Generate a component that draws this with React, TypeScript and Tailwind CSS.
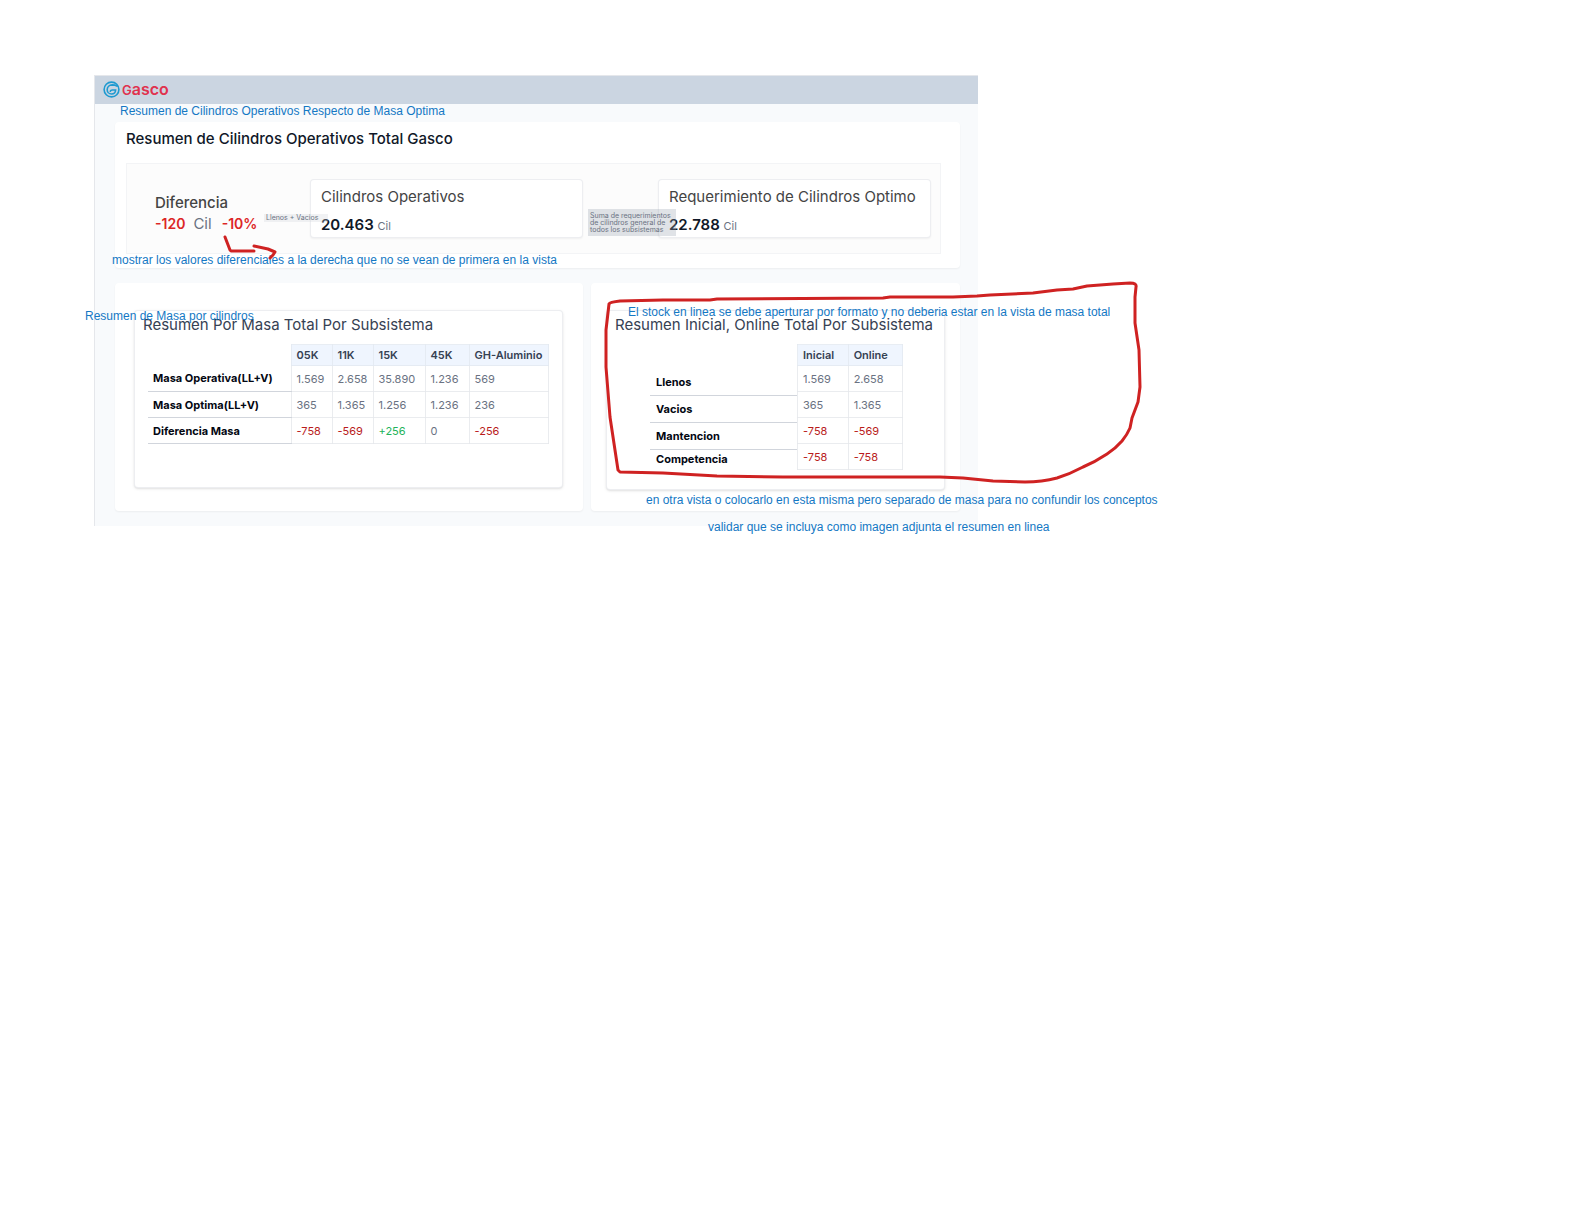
import type { ReactNode } from "react";

type Cell = { value: string; tone?: "red" | "green" };

const massColumns = ["05K", "11K", "15K", "45K", "GH-Aluminio"];
const massRows: { label: string; cells: Cell[] }[] = [
  {
    label: "Masa Operativa(LL+V)",
    cells: [{ value: "1.569" }, { value: "2.658" }, { value: "35.890" }, { value: "1.236" }, { value: "569" }],
  },
  {
    label: "Masa Optima(LL+V)",
    cells: [{ value: "365" }, { value: "1.365" }, { value: "1.256" }, { value: "1.236" }, { value: "236" }],
  },
  {
    label: "Diferencia Masa",
    cells: [
      { value: "-758", tone: "red" },
      { value: "-569", tone: "red" },
      { value: "+256", tone: "green" },
      { value: "0" },
      { value: "-256", tone: "red" },
    ],
  },
];

const stockColumns = ["Inicial", "Online"];
const stockLabels = ["Llenos", "Vacios", "Mantencion", "Competencia"];
const stockRows: Cell[][] = [
  [{ value: "1.569" }, { value: "2.658" }],
  [{ value: "365" }, { value: "1.365" }],
  [{ value: "-758", tone: "red" }, { value: "-569", tone: "red" }],
  [{ value: "-758", tone: "red" }, { value: "-758", tone: "red" }],
];

function toneClass(tone?: "red" | "green") {
  if (tone === "red") return "text-[#b91c1c]";
  if (tone === "green") return "text-[#22b35a]";
  return "text-gray-500";
}

function HeadCell({ children }: { children: ReactNode }) {
  return (
    <th scope="col" className="h-[21px] border border-slate-200/80 bg-[#eff5fe] px-[5px] text-left font-semibold whitespace-nowrap text-gray-700">
      {children}
    </th>
  );
}

function BodyCell({ cell }: { cell: Cell }) {
  return <td className={`border border-gray-200/80 px-[5px] ${toneClass(cell.tone)}`}>{cell.value}</td>;
}

function Logo() {
  return (
    <div className="flex items-center gap-[2px] pb-px">
      <svg viewBox="0 0 17 17" className="size-[17px]" fill="none" stroke="#1f9ad0" strokeWidth="1.6" strokeLinecap="round" aria-hidden="true">
        <circle cx="8.500" cy="8.500" r="7.400" />
        <path d="M14 5.200C12.500 4.200 10.800 3.900 9.200 3.900 6.300 4 4.200 6 4.200 8.700c0 2.500 1.900 4.300 4.300 4.300 2.300 0 4-1.500 4.100-4H9.300C8.200 9 7.500 9.500 7.300 10.300" />
      </svg>
      <span className="text-[16px] leading-5 font-semibold text-[#e0324e]">
        <span className="text-[13px]">G</span>asco
      </span>
    </div>
  );
}

function StatCard({ title, value }: { title: string; value: string }) {
  return (
    <section className="h-[59px] w-[273px] rounded-sm border border-gray-200/70 bg-white px-[10px] pt-[7px] shadow-xs">
      <h3 className="text-[15px] leading-5 text-[#444444]">{title}</h3>
      <p className="mt-[8px] text-[15px] leading-5 font-semibold text-gray-900">
        {value} <span className="text-[11px] font-normal text-gray-500">Cil</span>
      </p>
    </section>
  );
}

function Note({ className, children }: { className: string; children: ReactNode }) {
  return (
    <p className={`absolute font-['Liberation_Sans',sans-serif] text-[12px] leading-4 whitespace-nowrap text-[#1478c4] ${className}`}>
      {children}
    </p>
  );
}

function Scribbles() {
  return (
    <svg
      className="pointer-events-none absolute top-0 left-0 h-[560px] w-[1200px]"
      viewBox="0 0 1200 560"
      fill="none"
      stroke="#cf2222"
      strokeWidth="3"
      strokeLinecap="round"
      strokeLinejoin="round"
      aria-hidden="true"
    >
      <path d="M225 237l5 13 1 1 23 0M254 246l14 3 7 3-2 3-3 3" />
      <path d="M606 330L609 304Q610 302 620 301L663 300H710L717 299L883 298L890 297H953L977 296L990 295L1033 293L1057 290L1073 289L1087 286L1113 284L1130 283Q1137 283 1136 287L1135 297V323L1139 350L1140 387L1138 402L1132 418L1130 428Q1127 435 1122 441Q1115 449 1107 454Q1095 462 1083 467Q1070 474 1057 478Q1042 482 1025 482L993 481L963 478L940 477H783L717 476L663 473L620 472L618 470L610 417L606 367Z" />
    </svg>
  );
}

export default function App() {
  return (
    <main className="relative min-h-screen overflow-x-auto bg-white pt-[75px] pl-[94px] font-[Inter,sans-serif]">
      <div className="w-full max-w-[884px] border-t border-l border-gray-200 bg-slate-50 pb-[15px]">
        <header className="flex h-[28px] items-center bg-[#cbd5e1] pl-[8px]">
          <Logo />
        </header>

        <div className="mt-[18px] flex flex-col gap-[15px] pr-[18px] pl-[20px]">
          <section className="rounded-sm bg-white px-[11px] pt-[7px] pb-[14px] shadow-xs">
            <h1 className="text-[15px] leading-5 font-medium text-gray-900">Resumen de Cilindros Operativos Total Gasco</h1>
            <div className="mt-[14px] mr-[8px] flex h-[91px] items-start justify-between border border-gray-100 bg-[#fcfcfc] pt-[15px] pr-[9px] pl-[28px]">
              <div className="pt-[14px]">
                <h2 className="text-[15px] leading-5 font-medium text-[#444444]">Diferencia</h2>
                <p className="mt-px flex gap-[8px] text-[14px] leading-5 font-semibold text-[#dc2626]">
                  <span>-120</span>
                  <span className="text-[15px] font-normal text-gray-500">Cil</span>
                  <span className="pl-[2px]">-10%</span>
                </p>
              </div>
              <div className="flex gap-[75px]">
                <StatCard title="Cilindros Operativos" value="20.463" />
                <StatCard title="Requerimiento de Cilindros Optimo" value="22.788" />
              </div>
            </div>
          </section>

          <div className="flex items-stretch gap-[8px]">
            <section className="flex-1 rounded-sm bg-white pt-[27px] pr-[20px] pb-[23px] pl-[19px] shadow-xs">
              <div className="h-[178px] rounded-sm border border-gray-200/70 bg-white px-[13px] pt-[4px] shadow">
                <h2 className="-ml-[5px] text-[15px] leading-5 text-gray-700">Resumen Por Masa Total Por Subsistema</h2>
                <table className="mt-[9px] w-full table-fixed border-collapse text-[11px] leading-4">
                  <colgroup>
                    <col className="w-[143px]" />
                    <col className="w-[41px]" />
                    <col className="w-[41px]" />
                    <col className="w-[52px]" />
                    <col className="w-[44px]" />
                    <col />
                  </colgroup>
                  <thead>
                    <tr>
                      <td />
                      {massColumns.map((c) => (
                        <HeadCell key={c}>{c}</HeadCell>
                      ))}
                    </tr>
                  </thead>
                  <tbody>
                    {massRows.map((row) => (
                      <tr key={row.label} className="h-[26px]">
                        <th scope="row" className="border-b border-gray-300 px-[5px] text-left font-bold text-gray-950">
                          {row.label}
                        </th>
                        {row.cells.map((cell, i) => (
                          <BodyCell key={i} cell={cell} />
                        ))}
                      </tr>
                    ))}
                  </tbody>
                </table>
              </div>
            </section>

            <section className="w-[369px] rounded-sm bg-white px-[15px] pt-[27px] pb-[20px] shadow-xs">
              <div className="h-[180px] rounded-sm border border-gray-200/70 bg-white px-[8px] pt-[4px] shadow">
                <h2 className="text-[15px] leading-5 text-gray-700">Resumen Inicial, Online Total Por Subsistema</h2>
                <div className="mt-[9px] flex items-start pl-[35px] text-[11px] leading-4">
                  <ul className="w-[147px] pt-[25px] font-bold text-gray-950">
                    {stockLabels.map((label) => (
                      <li key={label} className="flex h-[27px] items-center border-b border-gray-300 px-[6px] last:h-[18px] last:border-0">
                        {label}
                      </li>
                    ))}
                  </ul>
                  <table className="w-[106px] border-collapse">
                    <thead>
                      <tr>
                        {stockColumns.map((c) => (
                          <HeadCell key={c}>{c}</HeadCell>
                        ))}
                      </tr>
                    </thead>
                    <tbody>
                      {stockRows.map((cells, r) => (
                        <tr key={r} className="h-[26px]">
                          {cells.map((cell, i) => (
                            <BodyCell key={i} cell={cell} />
                          ))}
                        </tr>
                      ))}
                    </tbody>
                  </table>
                </div>
              </div>
            </section>
          </div>
        </div>
      </div>

      <p className="absolute top-[214px] left-[264px] bg-gray-300/30 pr-[10px] pl-[2px] text-[7px] leading-[8px] whitespace-nowrap text-gray-500">
        Llenos + Vacios
      </p>
      <p className="absolute top-[209px] left-[588px] w-[88px] bg-gray-400/30 px-[2px] py-[3px] text-[7px] leading-[7px] whitespace-nowrap text-gray-500">
        Suma de requerimientos
        <br />
        de cilindros general de
        <br />
        todos los subsistemas
      </p>

      <Note className="top-[103px] left-[120px]">Resumen de Cilindros Operativos Respecto de Masa Optima</Note>
      <Note className="top-[252px] left-[112px]">
        mostrar los valores diferenciales a la derecha que no se vean de primera en la vista
      </Note>
      <Note className="top-[308px] left-[85px]">Resumen de Masa por cilindros</Note>
      <Note className="top-[304px] left-[628px]">
        El stock en linea se debe aperturar por formato y no deberia estar en la vista de masa total
      </Note>
      <Note className="top-[492px] left-[646px]">
        en otra vista o colocarlo en esta misma pero separado de masa para no confundir los conceptos
      </Note>
      <Note className="top-[519px] left-[708px]">validar que se incluya como imagen adjunta el resumen en linea</Note>
      <Scribbles />
    </main>
  );
}
